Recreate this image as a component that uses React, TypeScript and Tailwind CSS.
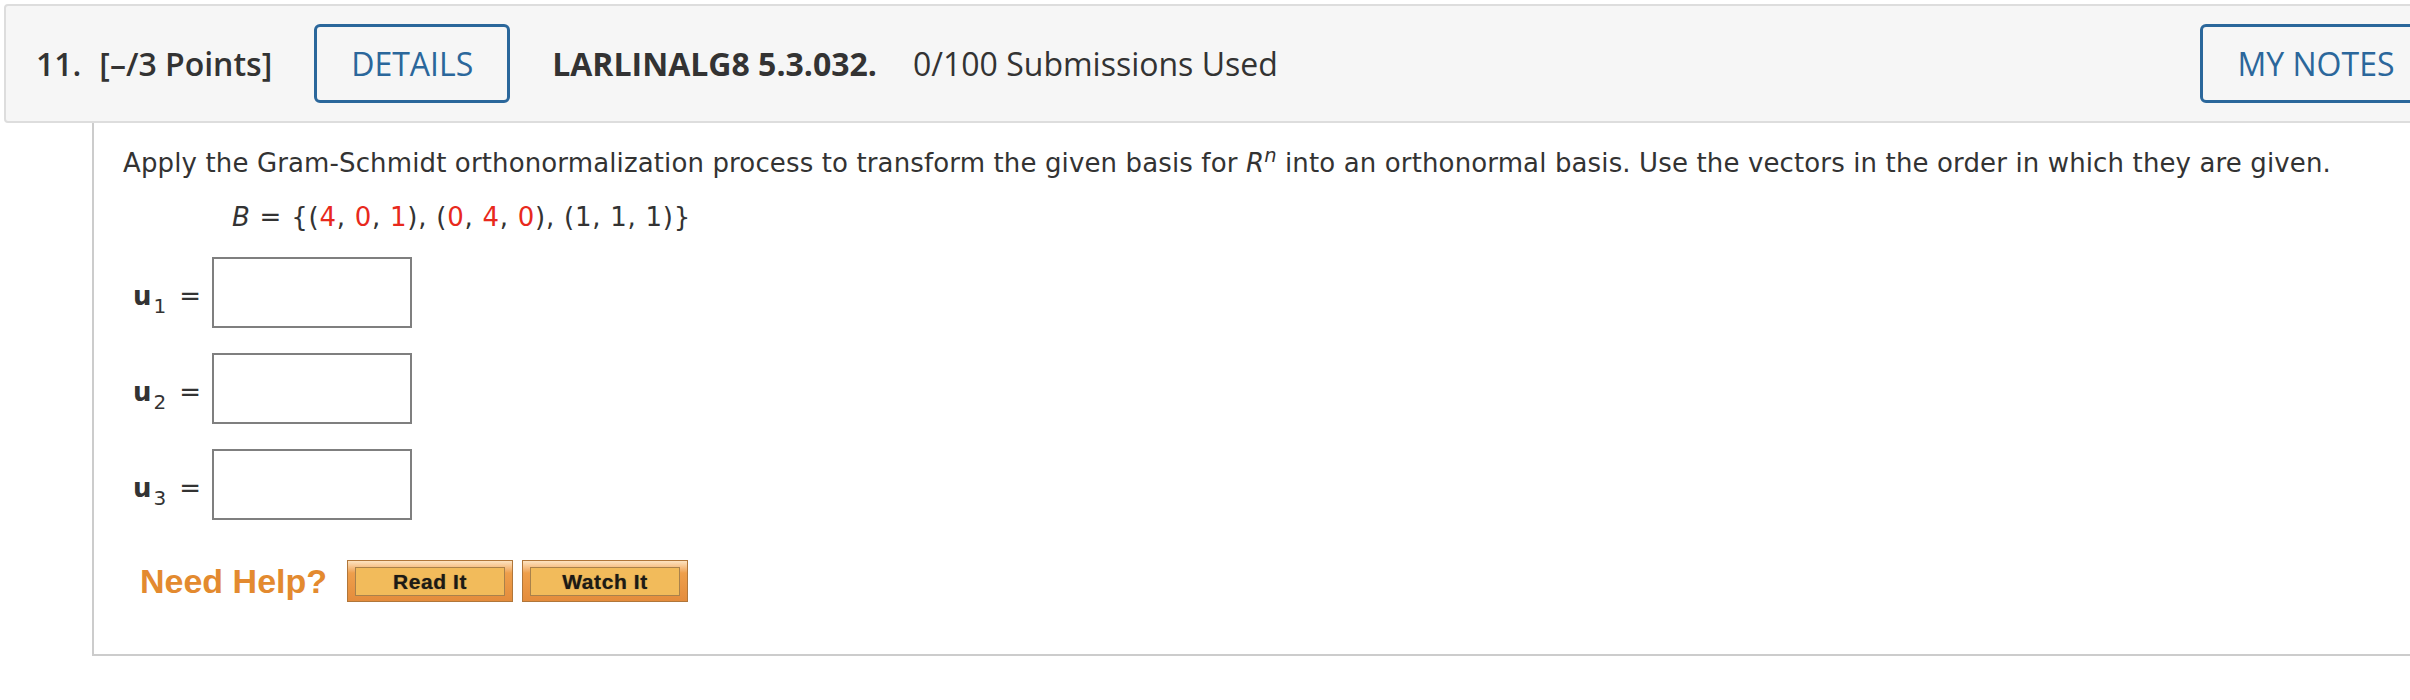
import React from "react";

function HelpButton({ label }: { label: string }) {
  return (
    <div className="flex h-[42px] w-[166px] border border-[#b0763a] bg-linear-to-b from-[#fde3c0] via-[#ee9f4b] via-30% to-[#e48c3c] px-[7px] pt-[6px] pb-[5px]">
      <div className="flex flex-1 items-center justify-center border border-[#a9814b] bg-[#f2bb5b] font-['Liberation_Sans',Arial,sans-serif] text-[21px] font-bold tracking-[0.6px] text-[#1c1a16] [text-shadow:0_0_1px_rgba(0,0,0,0.5)]">
        {label}
      </div>
    </div>
  );
}

function AnswerRow({ n }: { n: number }) {
  return (
    <div className="flex items-center">
      <div className="flex items-baseline pt-[7px] pl-[10px] font-['DejaVu_Sans',Verdana,sans-serif] text-[26px] leading-[39px] text-[#333]">
        <span className="font-bold">u</span>
        <span className="relative -bottom-2 ml-[2px] text-[20px] leading-none">{n}</span>
        <span className="ml-[13px]">=</span>
      </div>
      <div className="ml-[11px] h-[71px] w-[200px] border-2 border-[#7f7f7f] bg-white" />
    </div>
  );
}

export default function App() {
  const red = "text-[#e8291c]";
  return (
    <div className="h-[700px] w-full overflow-hidden bg-white">
      <div className="w-[2480px]">
        {/* Header */}
        <div className="ml-[4px] mt-[4px] flex h-[119px] w-[2460px] items-center rounded-[4px] border-2 border-[#dddddd] bg-[#f6f6f6] pl-[30px] pr-[30px] font-['Open_Sans',sans-serif] text-[32px] text-[#333]">
          <span className="font-semibold">11.</span>
          <span className="ml-[18px] font-semibold">[–/3 Points]</span>
          <div className="ml-[42px] flex h-[79px] w-[196px] items-center justify-center rounded-[6px] border-[3px] border-[#2b679b] text-[#2b679b]">
            DETAILS
          </div>
          <span className="ml-[42px] font-bold">LARLINALG8 5.3.032.</span>
          <span className="ml-[36px]">0/100 Submissions Used</span>
          <div className="ml-auto flex h-[79px] w-[232px] items-center justify-center rounded-[6px] border-[3px] border-[#2b679b] text-[#2b679b]">
            MY NOTES
          </div>
        </div>

        {/* Body panel */}
        <div className="ml-[92px] border-b-2 border-l-2 border-[#cccccc] pt-[21px] pb-[52px] pl-[29px] font-['DejaVu_Sans',Verdana,sans-serif] text-[26px] leading-[39px] text-[#333]">
          <p className="tracking-[0.13px]">
            Apply the Gram-Schmidt orthonormalization process to transform the given basis for{" "}
            <i>R</i>
            <sup className="italic">n</sup> into an orthonormal basis. Use the vectors in the order in which they are given.
          </p>
          <p className="mt-[15px] pl-[109px] tracking-[0.75px]">
            <i>B</i> = {"{"}(<span className={red}>4</span>, <span className={red}>0</span>, <span className={red}>1</span>), (
            <span className={red}>0</span>, <span className={red}>4</span>, <span className={red}>0</span>), (1, 1, 1){"}"}
          </p>

          <div className="mt-[20px] flex flex-col gap-[25px]">
            <AnswerRow n={1} />
            <AnswerRow n={2} />
            <AnswerRow n={3} />
          </div>

          <div className="mt-[40px] flex items-center pl-[17px]">
            <span className="font-['Liberation_Sans',Arial,sans-serif] text-[34px] font-bold leading-none text-[#e38a2f]">
              Need Help?
            </span>
            <div className="ml-[20px]">
              <HelpButton label="Read It" />
            </div>
            <div className="ml-[9px]">
              <HelpButton label="Watch It" />
            </div>
          </div>
        </div>
      </div>
    </div>
  );
}
